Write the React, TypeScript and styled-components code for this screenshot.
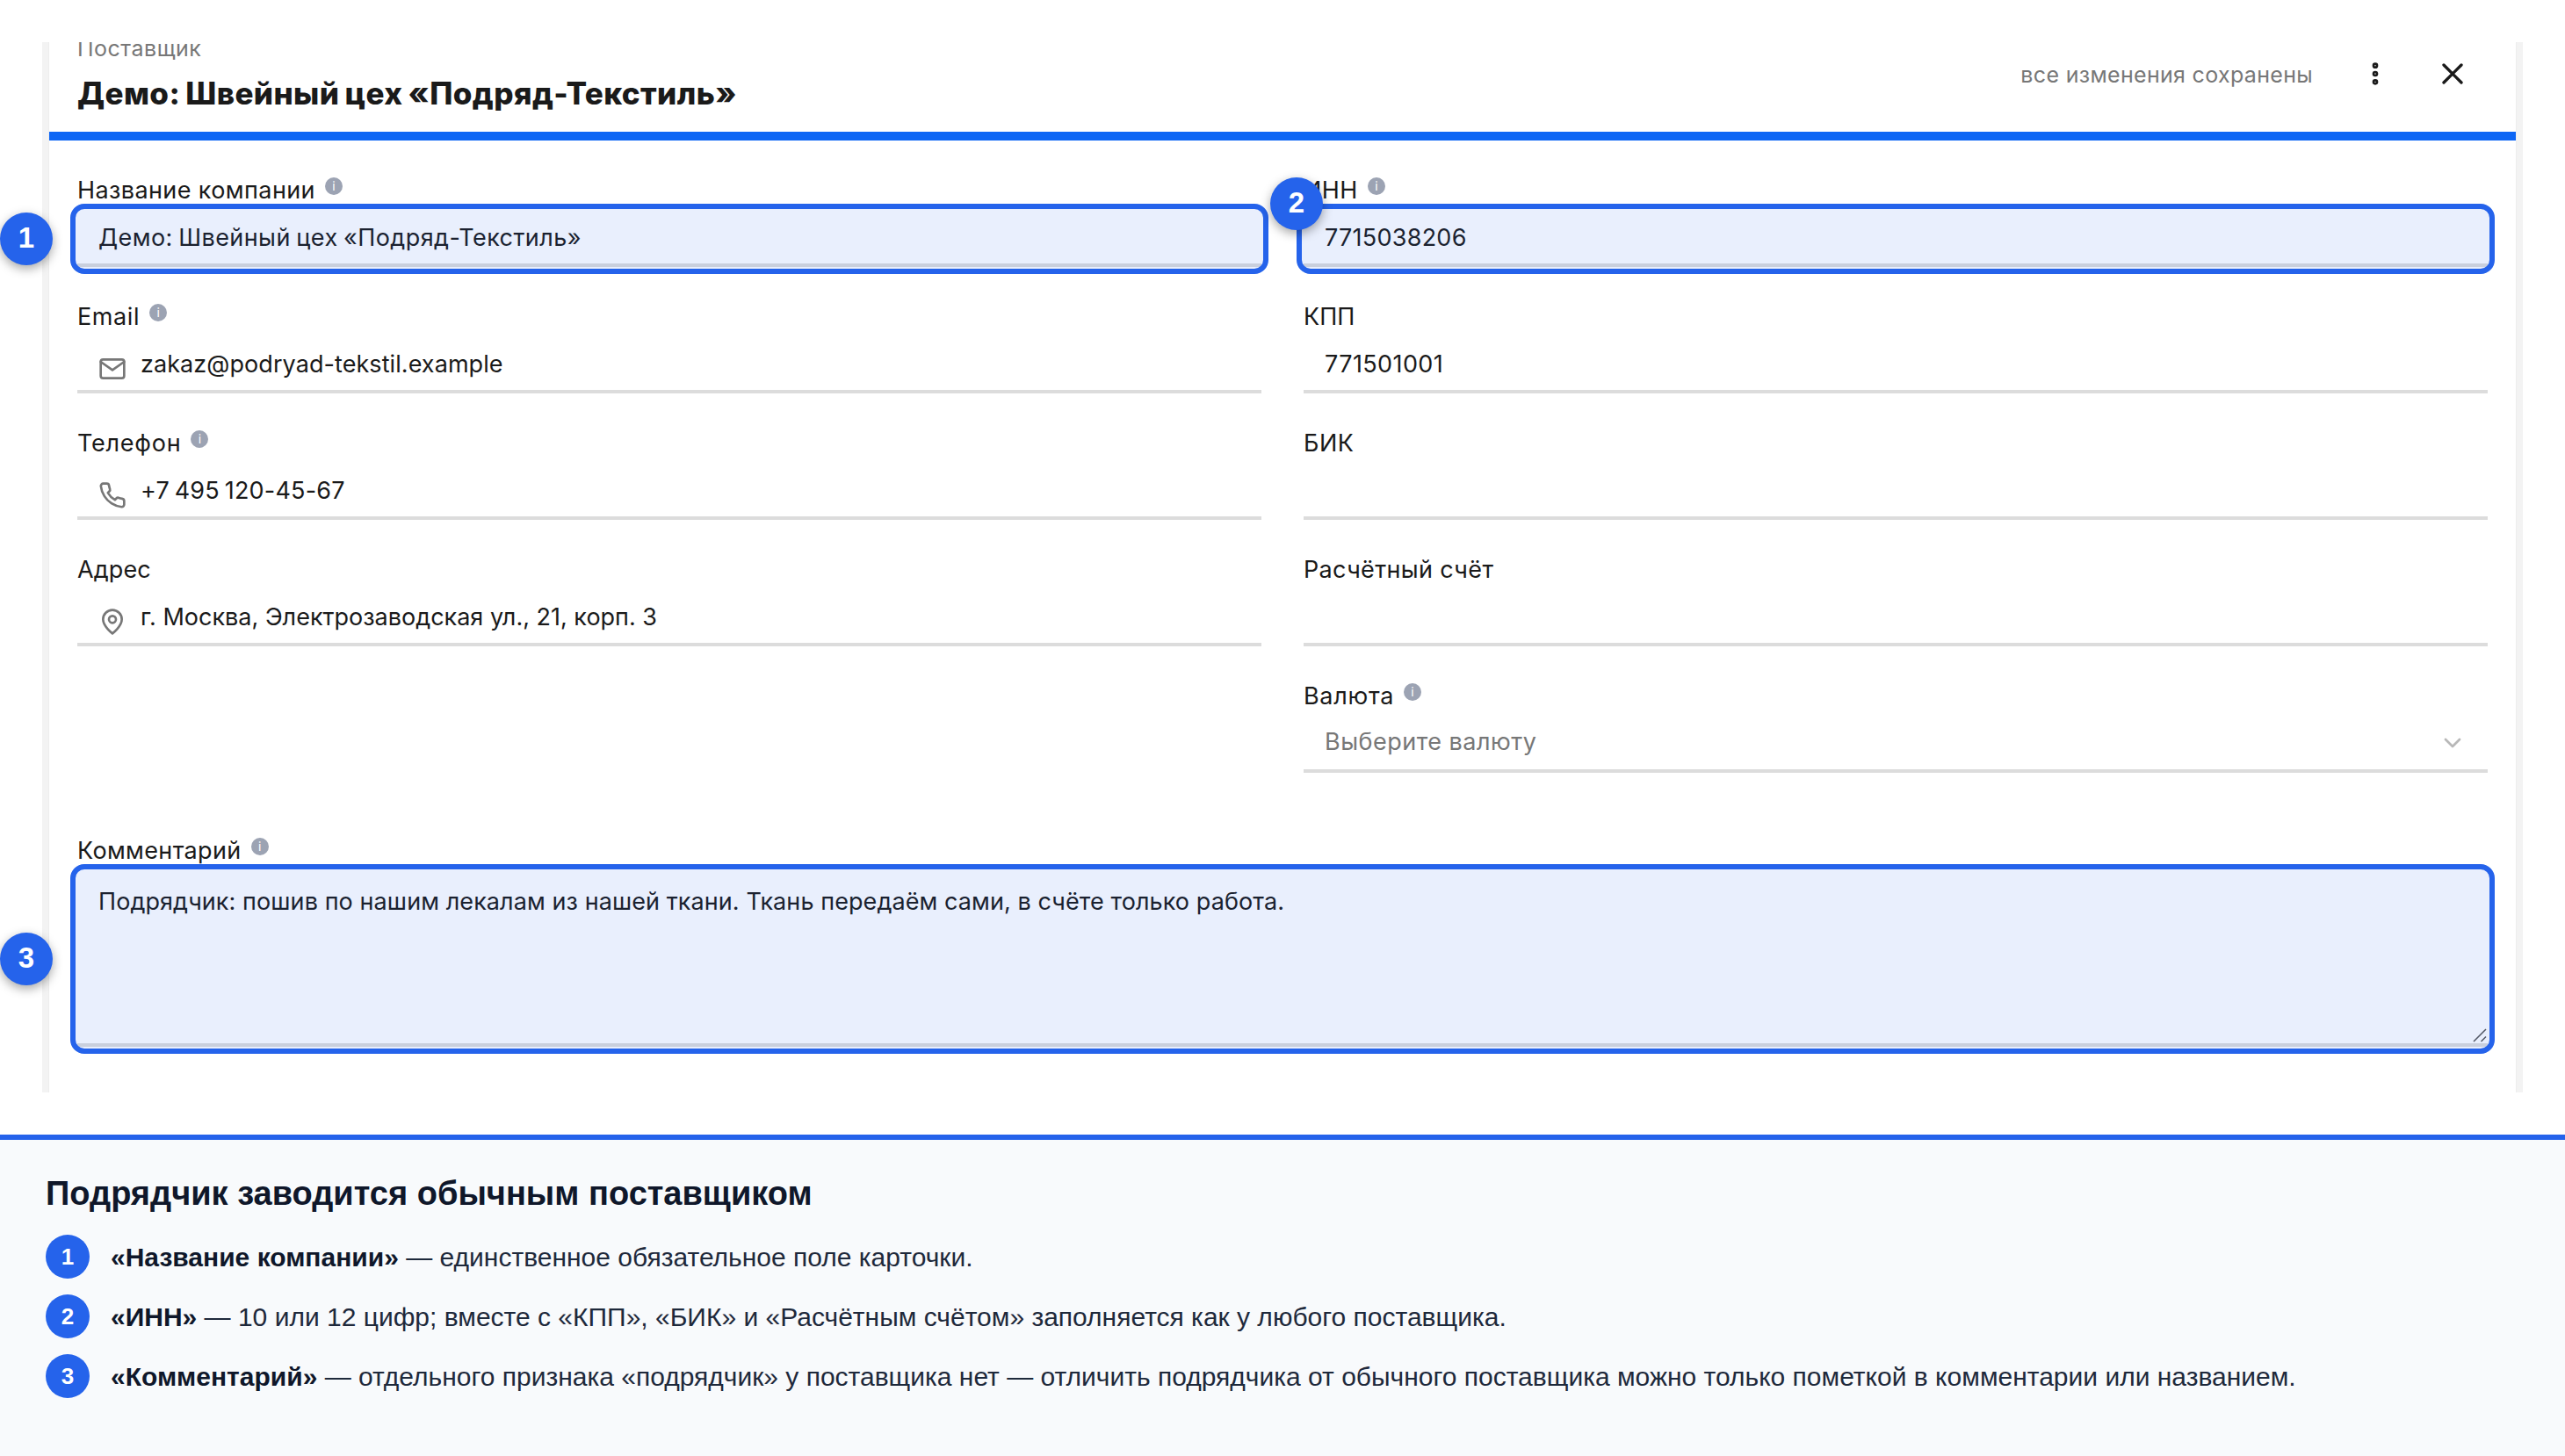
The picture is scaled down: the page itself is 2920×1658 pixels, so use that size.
import React from "react";
import styled, { createGlobalStyle, css } from "styled-components";

type IconName = "mail" | "phone" | "pin";

interface FieldData {
  label: string;
  labelTrack?: number;
  value?: string;
  valueTrack?: number;
  wordSpace?: number;
  info?: boolean;
  icon?: IconName;
  badge?: number;
  placeholder?: boolean;
}

const leftFields: FieldData[] = [
  { label: "Название компании", labelTrack: 0.4, value: "Демо: Швейный цех «Подряд-Текстиль»", valueTrack: 0.42, wordSpace: -1.5, info: true, badge: 1 },
  { label: "Email", labelTrack: 0.6, value: "zakaz@podryad-tekstil.example", valueTrack: 0.07, info: true, icon: "mail" },
  { label: "Телефон", labelTrack: 0.75, value: "+7 495 120-45-67", valueTrack: 0.2, wordSpace: -2, info: true, icon: "phone" },
  { label: "Адрес", labelTrack: 0.1, value: "г. Москва, Электрозаводская ул., 21, корп. 3", valueTrack: 0, icon: "pin" },
];

const rightFields: FieldData[] = [
  { label: "ИНН", value: "7715038206", valueTrack: 0.25, info: true, badge: 2 },
  { label: "КПП", labelTrack: 0, value: "771501001", valueTrack: 0.4 },
  { label: "БИК" },
  { label: "Расчётный счёт", labelTrack: 0.35 },
  { label: "Валюта", labelTrack: 0.7, value: "Выберите валюту", valueTrack: 0.48, info: true, placeholder: true },
];

const notes = [
  { title: "«Название компании»", text: "единственное обязательное поле карточки." },
  { title: "«ИНН»", text: "10 или 12 цифр; вместе с «КПП», «БИК» и «Расчётным счётом» заполняется как у любого поставщика." },
  {
    title: "«Комментарий»",
    text: "отдельного признака «подрядчик» у поставщика нет — отличить подрядчика от обычного поставщика можно только пометкой в комментарии или названием.",
  },
];

const FieldIcon: React.FC<{ name: IconName }> = ({ name }) => (
  <IconSvg viewBox="0 0 24 24">
    {name === "mail" && (
      <>
        <rect x="2" y="4" width="20" height="16" rx="2" />
        <path d="M22 6l-10 7L2 6" />
      </>
    )}
    {name === "phone" && (
      <path d="M22 16.92v3a2 2 0 0 1-2.18 2 19.79 19.79 0 0 1-8.63-3.07 19.5 19.5 0 0 1-6-6 19.79 19.79 0 0 1-3.07-8.67A2 2 0 0 1 4.11 2h3a2 2 0 0 1 2 1.72 12.84 12.84 0 0 0 .7 2.81 2 2 0 0 1-.45 2.11L8.09 9.91a16 16 0 0 0 6 6l1.27-1.27a2 2 0 0 1 2.11-.45 12.84 12.84 0 0 0 2.81.7A2 2 0 0 1 22 16.92z" />
    )}
    {name === "pin" && (
      <>
        <path d="M20 10c0 6-8 12-8 12s-8-6-8-12a8 8 0 0 1 16 0z" />
        <circle cx="12" cy="10" r="3" />
      </>
    )}
  </IconSvg>
);

const FieldLabel: React.FC<{ text: string; track?: number; info?: boolean }> = ({ text, track, info }) => (
  <LabelRow>
    <Label $track={track ?? 0.45}>{text}</Label>
    {info && <InfoDot>i</InfoDot>}
  </LabelRow>
);

const Field: React.FC<{ field: FieldData }> = ({ field }) => (
  <div>
    <FieldLabel text={field.label} track={field.labelTrack} info={field.info} />
    <Control $marked={!!field.badge}>
      {field.icon && <FieldIcon name={field.icon} />}
      <Value $track={field.valueTrack ?? 0} $wordSpace={field.wordSpace} $placeholder={field.placeholder}>
        {field.value}
      </Value>
      {field.placeholder && (
        <Chevron viewBox="0 0 24 24">
          <path d="M6 9l6 6 6-6" />
        </Chevron>
      )}
      {field.badge && <Badge $corner={field.badge === 2}>{field.badge}</Badge>}
    </Control>
  </div>
);

const App: React.FC = () => {
  return (
    <Page>
      <GlobalStyle />
      <Card>
        <CardInner>
          <Header>
            <div>
              <Kind>Поставщик</Kind>
              <Title>Демо: Швейный цех «Подряд-Текстиль»</Title>
            </div>
            <Actions>
              <Status>все изменения сохранены</Status>
              <DotsIcon viewBox="0 0 24 24">
                <circle cx="12" cy="5" r="1.5" />
                <circle cx="12" cy="12" r="1.5" />
                <circle cx="12" cy="19" r="1.5" />
              </DotsIcon>
              <CloseIcon viewBox="0 0 24 24">
                <path d="M18 6L6 18M6 6l12 12" />
              </CloseIcon>
            </Actions>
          </Header>
          <Form>
            <Columns>
              <Column>
                {leftFields.map((field) => (
                  <Field key={field.label} field={field} />
                ))}
              </Column>
              <Column>
                {rightFields.map((field) => (
                  <Field key={field.label} field={field} />
                ))}
              </Column>
            </Columns>
            <div>
              <FieldLabel text="Комментарий" track={0.35} info />
              <Comment $marked>
                <Value $track={0.08}>
                  Подрядчик: пошив по нашим лекалам из нашей ткани. Ткань передаём сами, в счёте только работа.
                </Value>
                <Grip viewBox="0 0 16 16">
                  <path d="M1 15L15 1M9.5 15L15 9.5" />
                </Grip>
                <Badge $tall>3</Badge>
              </Comment>
            </div>
          </Form>
        </CardInner>
      </Card>
      <Legend>
        <LegendTitle>Подрядчик заводится обычным поставщиком</LegendTitle>
        <LegendList>
          {notes.map((note, index) => (
            <LegendItem key={note.title}>
              <LegendNumber>{index + 1}</LegendNumber>
              <LegendText>
                <b>{note.title}</b> — {note.text}
              </LegendText>
            </LegendItem>
          ))}
        </LegendList>
      </Legend>
    </Page>
  );
};

export default App;

const GlobalStyle = createGlobalStyle`
  * {
    box-sizing: border-box;
  }
  body {
    margin: 0;
    background: #fff;
  }
`;

const Page = styled.div`
  display: flex;
  flex-direction: column;
  min-height: 100vh;
  font-family: Inter, "Liberation Sans", sans-serif;
  color: #1a1a1a;
`;

const Card = styled.section`
  height: 1196px;
  margin: 48px 48px 48px;
  padding: 0 8px;
  background: #f3f3f3;
`;

const CardInner = styled.div`
  height: 100%;
  background: #fff;
  box-shadow: -1px 0 #ededed, 1px 0 #ededed;
`;

const Header = styled.header`
  display: flex;
  justify-content: space-between;
  height: 112px;
  padding: 0 52px 0 32px;
  border-bottom: 10px solid #0d66f5;
  overflow: hidden;
`;

const Kind = styled.div`
  margin-top: -9px;
  font-size: 25px;
  line-height: 32px;
  letter-spacing: 0.5px;
  color: #777;
`;

const Title = styled.h1`
  margin: 13px 0 0;
  font-size: 35px;
  line-height: 44px;
  font-weight: 800;
  letter-spacing: 0.4px;
  word-spacing: -2px;
`;

const Actions = styled.div`
  display: flex;
  align-items: center;
  gap: 52px;
  height: 72px;
`;

const Status = styled.span`
  padding: 2px 3px 0 0;
  font-size: 25px;
  line-height: 32px;
  letter-spacing: 0.32px;
  color: #777;
`;

const DotsIcon = styled.svg`
  width: 32px;
  height: 32px;
  fill: none;
  stroke: #1a1a1a;
  stroke-width: 2;
`;

const CloseIcon = styled.svg`
  width: 40px;
  height: 40px;
  fill: none;
  stroke: #1a1a1a;
  stroke-width: 2;
  stroke-linecap: round;
`;

const Form = styled.div`
  display: flex;
  flex-direction: column;
  gap: 72px;
  padding: 40px 32px 0;
`;

const Columns = styled.div`
  display: grid;
  grid-template-columns: 1fr 1fr;
  column-gap: 48px;
`;

const Column = styled.div`
  display: flex;
  flex-direction: column;
  gap: 40px;
`;

const LabelRow = styled.div`
  display: flex;
  gap: 11px;
  height: 40px;
`;

const Label = styled.span<{ $track: number }>`
  padding-top: 1px;
  font-size: 27px;
  line-height: 32px;
  letter-spacing: ${({ $track }) => $track}px;
`;

const InfoDot = styled.span`
  width: 20px;
  height: 20px;
  margin-top: 2px;
  border-radius: 50%;
  background: #9ca3b3;
  color: #fff;
  font-size: 14px;
  line-height: 20px;
  text-align: center;
`;

// overlay frame drawn 8px outside of the control, bottom border included
const marked = css`
  &::after {
    content: "";
    position: absolute;
    inset: -8px -8px -12px;
    border: 6px solid #2563eb;
    border-radius: 16px;
    background: rgba(37, 99, 235, 0.1);
  }
`;

const Control = styled.div<{ $marked?: boolean }>`
  position: relative;
  display: flex;
  gap: 16px;
  height: 64px;
  padding: 0 24px;
  border-bottom: 4px solid #dcdcdc;
  ${({ $marked }) => $marked && marked}
`;

const Comment = styled(Control)`
  height: 200px;
  padding-top: 4px;
`;

const Value = styled.span<{ $track: number; $wordSpace?: number; $placeholder?: boolean }>`
  flex: 1;
  padding-top: ${({ $placeholder }) => ($placeholder ? 13 : 15)}px;
  font-size: 27px;
  line-height: 32px;
  letter-spacing: ${({ $track }) => $track}px;
  word-spacing: ${({ $wordSpace }) => $wordSpace ?? 0}px;
  white-space: nowrap;
  color: ${({ $placeholder }) => ($placeholder ? "#777" : "#1a1a1a")};
`;

const IconSvg = styled.svg`
  width: 32px;
  height: 32px;
  margin-top: 20px;
  fill: none;
  stroke: #777;
  stroke-width: 2;
  stroke-linecap: round;
  stroke-linejoin: round;
`;

const Chevron = styled.svg`
  width: 32px;
  height: 32px;
  margin-top: 14px;
  fill: none;
  stroke: #b8b8b8;
  stroke-width: 2;
  stroke-linecap: round;
  stroke-linejoin: round;
`;

const Grip = styled.svg`
  position: absolute;
  right: 1px;
  bottom: 1px;
  width: 16px;
  height: 16px;
  fill: none;
  stroke: #555;
  stroke-width: 1.5;
`;

const Badge = styled.span<{ $corner?: boolean; $tall?: boolean }>`
  position: absolute;
  z-index: 1;
  left: ${({ $corner }) => ($corner ? -38 : -88)}px;
  top: ${({ $corner, $tall }) => ($corner ? -38 : $tall ? 70 : 2)}px;
  width: 60px;
  height: 60px;
  border-radius: 50%;
  background: #2563eb;
  box-shadow: 0 4px 12px rgba(0, 0, 0, 0.35);
  color: #fff;
  font: 700 33px/57px "Liberation Sans", Arial, sans-serif;
  text-align: center;
`;

const Legend = styled.footer`
  flex: 1;
  padding: 39px 52px 0;
  border-top: 6px solid #2563eb;
  background: #f8fafc;
  font-family: "Liberation Sans", Arial, sans-serif;
`;

const LegendTitle = styled.h2`
  margin: 0 0 25px;
  font-size: 38px;
  line-height: 44px;
  color: #0f172a;
`;

const LegendList = styled.ol`
  display: flex;
  flex-direction: column;
  gap: 18px;
  margin: 0;
  padding: 0;
  list-style: none;
`;

const LegendItem = styled.li`
  display: flex;
  gap: 24px;
  height: 50px;
`;

const LegendNumber = styled.span`
  width: 50px;
  height: 50px;
  border-radius: 50%;
  background: #2563eb;
  color: #fff;
  font-size: 26px;
  font-weight: 700;
  line-height: 50px;
  text-align: center;
`;

const LegendText = styled.span`
  padding-top: 1px;
  font-size: 30px;
  line-height: 50px;
  color: #1e293b;

  b {
    color: #0f172a;
  }
`;
